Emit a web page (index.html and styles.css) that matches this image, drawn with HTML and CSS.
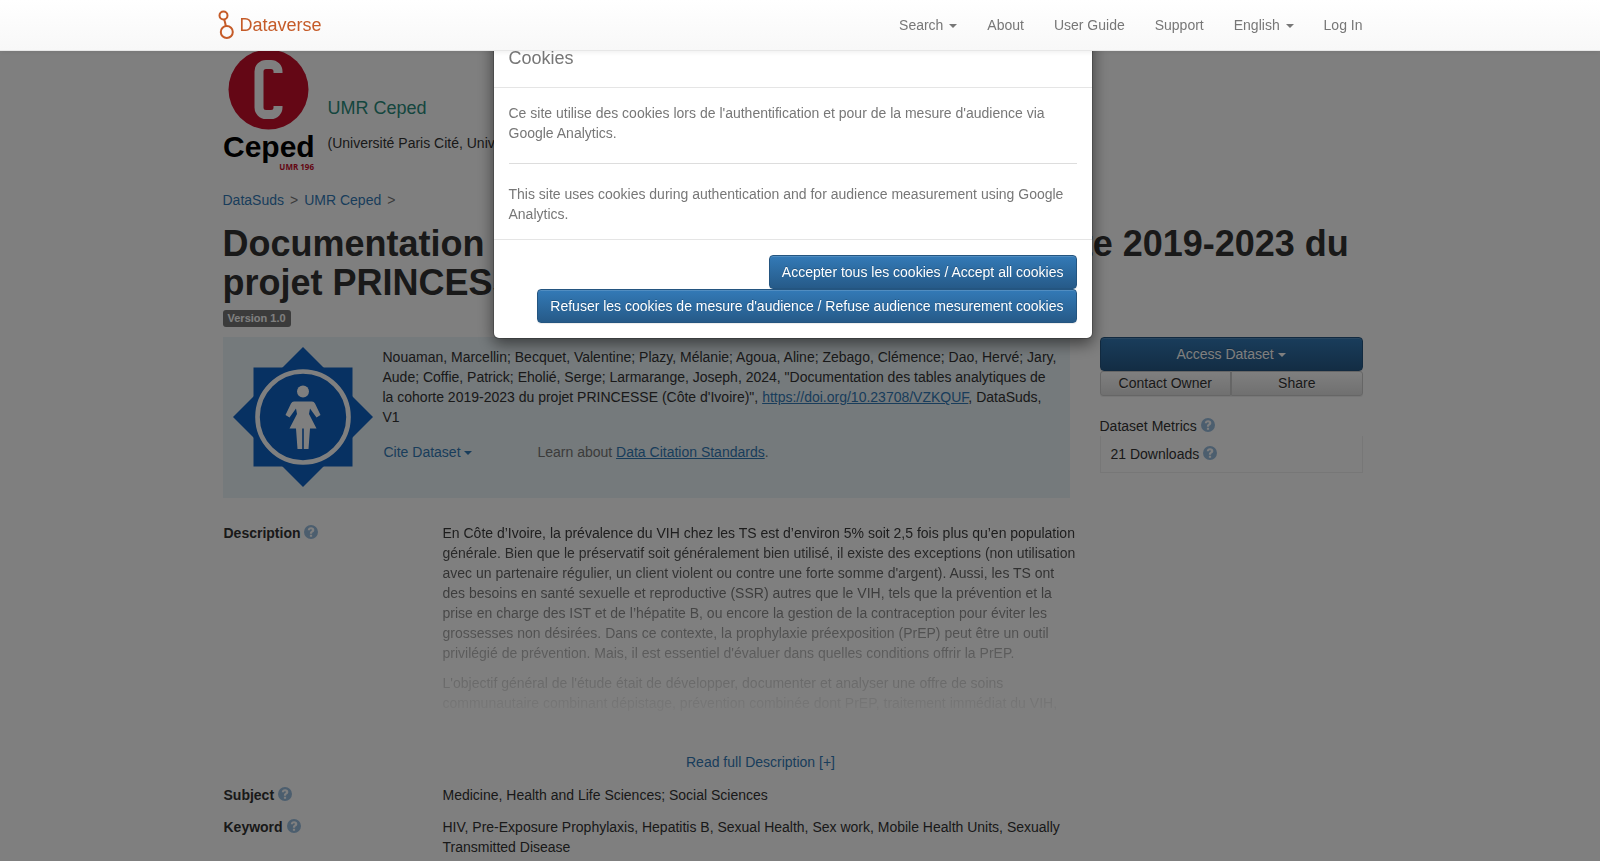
FILE: index.html
```html
<!DOCTYPE html>
<html lang="en">
<head>
<meta charset="utf-8">
<meta name="viewport" content="width=device-width, initial-scale=1">
<title>Documentation des tables analytiques - UMR Ceped</title>
<link rel="stylesheet" href="styles.css">
</head>
<body>
<svg class="sprite" aria-hidden="true">
  <symbol id="help" viewBox="0 0 14 14">
    <path fill-rule="evenodd" d="M7 0a7 7 0 1 0 0 14A7 7 0 0 0 7 0ZM5.900 9.700h2.200v2H5.900ZM3.800 5.300C3.900 3.300 5.100 2.300 7.100 2.300c1.900 0 3.200 1 3.200 2.600 0 1.300-.7 1.900-1.400 2.400-.6.400-.8.600-.8 1.500H5.900c0-1.500.4-2.100 1.200-2.700.6-.4.9-.6.900-1.100s-.4-.8-1-.8c-.7 0-1 .4-1.100 1.100Z"/>
  </symbol>
</svg>

<nav class="navbar">
  <div class="container navbar-inner">
    <a class="brand" href="#">
      <svg class="brand-icon" viewBox="0 0 18 30" aria-hidden="true">
        <circle cx="5.500" cy="5.500" r="4"/><path d="M6.300 9.500 8 16.500"/><circle cx="8.800" cy="22" r="6"/>
      </svg>
      <span>Dataverse</span>
    </a>
    <div class="nav-links">
      <a href="#">Search <span class="caret"></span></a>
      <a href="#">About</a>
      <a href="#">User Guide</a>
      <a href="#">Support</a>
      <a href="#">English <span class="caret"></span></a>
      <a href="#">Log In</a>
    </div>
  </div>
</nav>

<main class="container page">
  <header class="banner">
    <svg class="banner-logo" viewBox="0 0 91 120" role="img" aria-label="Ceped UMR 196">
      <circle cx="45.500" cy="39.500" r="40" fill="#c80e2b"/>
      <rect x="36" y="14.500" width="19" height="50" rx="7" fill="none" stroke="#fff" stroke-width="9"/>
      <rect x="50" y="23" width="11" height="33" fill="#c80e2b"/>
      <text class="logo-word" x="0" y="107">Ceped</text>
      <text class="logo-sub" x="91" y="120" text-anchor="end">UMR 196</text>
    </svg>
    <div class="banner-text">
      <a class="banner-name" href="#">UMR Ceped</a>
      <span class="banner-aff">(Université Paris Cité, Université Sorbonne Paris Nord, IRD)</span>
    </div>
  </header>

  <div class="crumbs"><a href="#">DataSuds</a><span>&gt;</span><a href="#">UMR Ceped</a><span>&gt;</span></div>

  <h1 class="title">Documentation des tables analytiques de la cohorte 2019-2023 du projet PRINCESSE (Côte d'Ivoire)</h1>
  <div class="labels"><span class="badge">Version 1.0</span></div>

  <div class="columns">
    <section class="citation">
      <svg class="thumb" viewBox="0 0 140 140" aria-hidden="true">
        <g fill="#0e62c4"><path d="M20.500 20.500h99v99h-99Z"/><path d="M70 0 140 70 70 140 0 70Z"/></g>
        <circle cx="70" cy="70" r="45.500" fill="none" stroke="#fff" stroke-width="4.600"/>
        <g fill="#fff"><circle cx="70" cy="44.500" r="6"/>
        <path d="M61 54.500h18q2 0 3 2l5.500 11.500-4 2.500-6.500-9-1 5.500 7.500 14.500h-6.500l-1.500 20.500h-4.700V81.500h-1.600v20.500h-4.700L63 81.500h-6.500L64 67l-1-5.500-6.500 9-4-2.500L58 56.500q1-2 3-2Z"/></g>
      </svg>
      <div class="citation-body">
        <p class="citation-text">Nouaman, Marcellin; Becquet, Valentine; Plazy, Mélanie; Agoua, Aline; Zebago, Clémence; Dao, Hervé; Jary, Aude; Coffie, Patrick; Eholié, Serge; Larmarange, Joseph, 2024, "Documentation des tables analytiques de la cohorte 2019-2023 du projet PRINCESSE (Côte d'Ivoire)", <a href="#">https://doi.org/10.23708/VZKQUF</a>, DataSuds, V1</p>
        <div class="citation-tools">
          <button class="cite" type="button">Cite Dataset <span class="caret"></span></button>
          <span class="learn">Learn about <a href="#">Data Citation Standards</a>.</span>
        </div>
      </div>
    </section>

    <aside class="side">
      <button class="btn btn-primary btn-block" type="button">Access Dataset <span class="caret"></span></button>
      <div class="btn-pair">
        <button class="btn-small" type="button">Contact Owner</button>
        <button class="btn-small" type="button">Share</button>
      </div>
      <div class="metrics-head">Dataset Metrics <svg class="help"><use href="#help"/></svg></div>
      <div class="metrics-box">21 Downloads <svg class="help"><use href="#help"/></svg></div>
    </aside>
  </div>

  <table class="meta">
    <tr>
      <th scope="row">Description <svg class="help"><use href="#help"/></svg></th>
      <td>
        <div class="fade">
          <p>En Côte d’Ivoire, la prévalence du VIH chez les TS est d’environ 5% soit 2,5 fois plus qu’en population générale. Bien que le préservatif soit généralement bien utilisé, il existe des exceptions (non utilisation avec un partenaire régulier, un client violent ou contre une forte somme d'argent). Aussi, les TS ont des besoins en santé sexuelle et reproductive (SSR) autres que le VIH, tels que la prévention et la prise en charge des IST et de l’hépatite B, ou encore la gestion de la contraception pour éviter les grossesses non désirées. Dans ce contexte, la prophylaxie préexposition (PrEP) peut être un outil privilégié de prévention. Mais, il est essentiel d'évaluer dans quelles conditions offrir la PrEP.</p>
          <p>L'objectif général de l'étude était de développer, documenter et analyser une offre de soins communautaire combinant dépistage, prévention combinée dont PrEP, traitement immédiat du VIH,</p>
        </div>
        <button class="more" type="button">Read full Description [+]</button>
      </td>
    </tr>
    <tr>
      <th scope="row">Subject <svg class="help"><use href="#help"/></svg></th>
      <td>Medicine, Health and Life Sciences; Social Sciences</td>
    </tr>
    <tr>
      <th scope="row">Keyword <svg class="help"><use href="#help"/></svg></th>
      <td>HIV, Pre-Exposure Prophylaxis, Hepatitis B, Sexual Health, Sex work, Mobile Health Units, Sexually Transmitted Disease</td>
    </tr>
  </table>
</main>

<div class="backdrop">
  <div class="modal" role="dialog" aria-modal="true" aria-labelledby="cookie-title">
    <div class="modal-header"><h4 id="cookie-title">Cookies</h4></div>
    <div class="modal-body">
      <p>Ce site utilise des cookies lors de l'authentification et pour de la mesure d'audience via Google Analytics.</p>
      <hr>
      <p>This site uses cookies during authentication and for audience measurement using Google Analytics.</p>
    </div>
    <div class="modal-footer">
      <button class="btn btn-primary" type="button">Accepter tous les cookies / Accept all cookies</button>
      <button class="btn btn-primary" type="button">Refuser les cookies de mesure d'audience / Refuse audience mesurement cookies</button>
    </div>
  </div>
</div>
</body>
</html>
```
FILE: styles.css
```css
* { box-sizing: border-box; }

body {
  margin: 0;
  height: 100vh;
  overflow: hidden;
  background: #fff;
  color: #333;
  font: 14px/20px "Liberation Sans", Arial, sans-serif;
}

a { color: #337ab7; text-decoration: none; }
p { margin: 0; }
button { font: inherit; cursor: pointer; }

.sprite { position: absolute; width: 0; height: 0; }

.container {
  width: 100%;
  max-width: 1170px;
  margin: 0 auto;
  padding: 0 15px;
}

.caret {
  display: inline-block;
  vertical-align: middle;
  border-top: 4px solid;
  border-right: 4px solid transparent;
  border-left: 4px solid transparent;
}

.help {
  width: 14px;
  height: 14px;
  fill: #99bddd;
  vertical-align: -1px;
}

/* Top bar */
.navbar {
  position: fixed;
  inset: 0 0 auto;
  z-index: 30;
  padding-right: 15px;
  border-bottom: 1px solid #e7e7e7;
  background: linear-gradient(#fff, #f8f8f8);
  box-shadow: 0 1px 5px rgba(0, 0, 0, .075);
}
.navbar-inner {
  display: flex;
  justify-content: space-between;
  align-items: center;
  height: 50px;
  padding-left: 10px;
}
.brand {
  display: flex;
  align-items: center;
  gap: 4px;
  color: #c55b28;
  font-size: 18px;
}
.brand-icon {
  width: 18px;
  height: 30px;
  fill: none;
  stroke: #c55b28;
  stroke-width: 2;
}
.nav-links { display: flex; gap: 30px; }
.nav-links a { color: #777; }
.nav-links .caret { margin-left: 2px; }

/* Page */
body > .page {
  width: calc(100% - 15px);
  margin-left: max(0px, calc((100% - 1185px) / 2));
  padding-top: 50px;
}

.banner { display: flex; gap: 14px; height: 120px; }
.banner-logo { width: 91px; height: 120px; overflow: visible; }
.logo-word { font: bold 30px "Liberation Sans Narrow", "Liberation Sans", sans-serif; }
.logo-sub { font: bold 8px "Open Sans", sans-serif; fill: #c80e2b; }
.banner-text { display: flex; flex-direction: column; gap: 14px; padding-top: 45px; }
.banner-name { color: #2a8c7c; font-size: 18px; line-height: 26px; }
.banner-aff { line-height: 16px; }

.crumbs { display: flex; gap: 6px; margin-top: 20px; color: #777; }

.title {
  margin: 14px 0 8px;
  font-size: 36px;
  line-height: 39px;
}

.labels { display: flex; }
.badge {
  padding: 0 5px;
  border-radius: 3px;
  background: #777;
  color: #fff;
  font-size: 11px;
  font-weight: bold;
  line-height: 17px;
}

.columns {
  display: grid;
  grid-template-columns: minmax(0, 1fr) 263px;
  gap: 30px;
  align-items: start;
  margin-top: 10px;
}

.citation {
  display: flex;
  gap: 10px;
  min-height: 161px;
  padding: 10px;
  background: #eaf4f8;
}
.thumb { flex: none; width: 140px; height: 140px; }
.citation-text a, .learn a { text-decoration: underline; }
.citation-tools { display: flex; gap: 64px; margin-top: 15px; }
.cite { padding: 0 1px; border: 0; background: none; color: #337ab7; }
.learn { color: #777; }

.btn {
  padding: 6px 12px;
  border: 1px solid #245580;
  border-radius: 4px;
  color: #fff;
  text-align: center;
  text-shadow: 0 -1px 0 rgba(0, 0, 0, .2);
  box-shadow: inset 0 1px 0 rgba(255, 255, 255, .15), 0 1px 1px rgba(0, 0, 0, .075);
}
.btn-primary { background: linear-gradient(#337ab7, #265a88); }
.btn-block { width: 100%; }

.btn-pair { display: flex; }
.btn-small {
  flex: 1;
  padding: 1px 5px;
  border: 1px solid #ccc;
  border-radius: 0 3px 3px 0;
  background: linear-gradient(#fff, #e0e0e0);
  color: #333;
  line-height: 21px;
  text-shadow: 0 1px 0 #fff;
  box-shadow: inset 0 1px 0 rgba(255, 255, 255, .15), 0 1px 1px rgba(0, 0, 0, .075);
}
.btn-small:first-child { border-radius: 3px 0 0 3px; }

.metrics-head { margin-top: 20px; }
.metrics-box {
  padding: 8px 10px;
  border: 1px solid #eee;
  border-top: 0;
}

/* Metadata rows */
.meta {
  width: 857px;
  max-width: 100%;
  margin-top: 19px;
  border-collapse: collapse;
}
.meta th, .meta td { padding: 6px 1px; text-align: left; vertical-align: top; }
.meta th { width: 219px; }
.fade {
  height: 200px;
  -webkit-mask-image: linear-gradient(#000, transparent);
  mask-image: linear-gradient(#000, transparent);
}
.fade p + p { margin-top: 10px; }
.more {
  display: block;
  margin: 29px auto 1px;
  padding: 0;
  border: 0;
  background: none;
  color: #337ab7;
}

/* Cookie dialog */
.backdrop {
  position: fixed;
  inset: 0;
  z-index: 20;
  padding: 30px 15px 0 0;
  background: rgba(0, 0, 0, .5);
}
.modal {
  width: 600px;
  max-width: 100%;
  margin: 0 auto;
  border: 1px solid rgba(0, 0, 0, .2);
  border-radius: 6px;
  background: #fff;
  background-clip: padding-box;
  box-shadow: 0 5px 15px rgba(0, 0, 0, .5);
  color: #777;
}
.modal-header { padding: 15px; border-bottom: 1px solid #e5e5e5; }
.modal-header h4 { margin: 0 0 2px; font-size: 18px; font-weight: normal; line-height: 24px; }
.modal-body { padding: 15px; }
.modal-body hr { margin: 20px 0; border: 0; border-top: 1px solid #ddd; }
.modal-footer {
  display: flex;
  flex-direction: column;
  align-items: flex-end;
  padding: 15px;
  border-top: 1px solid #e5e5e5;
}
```
